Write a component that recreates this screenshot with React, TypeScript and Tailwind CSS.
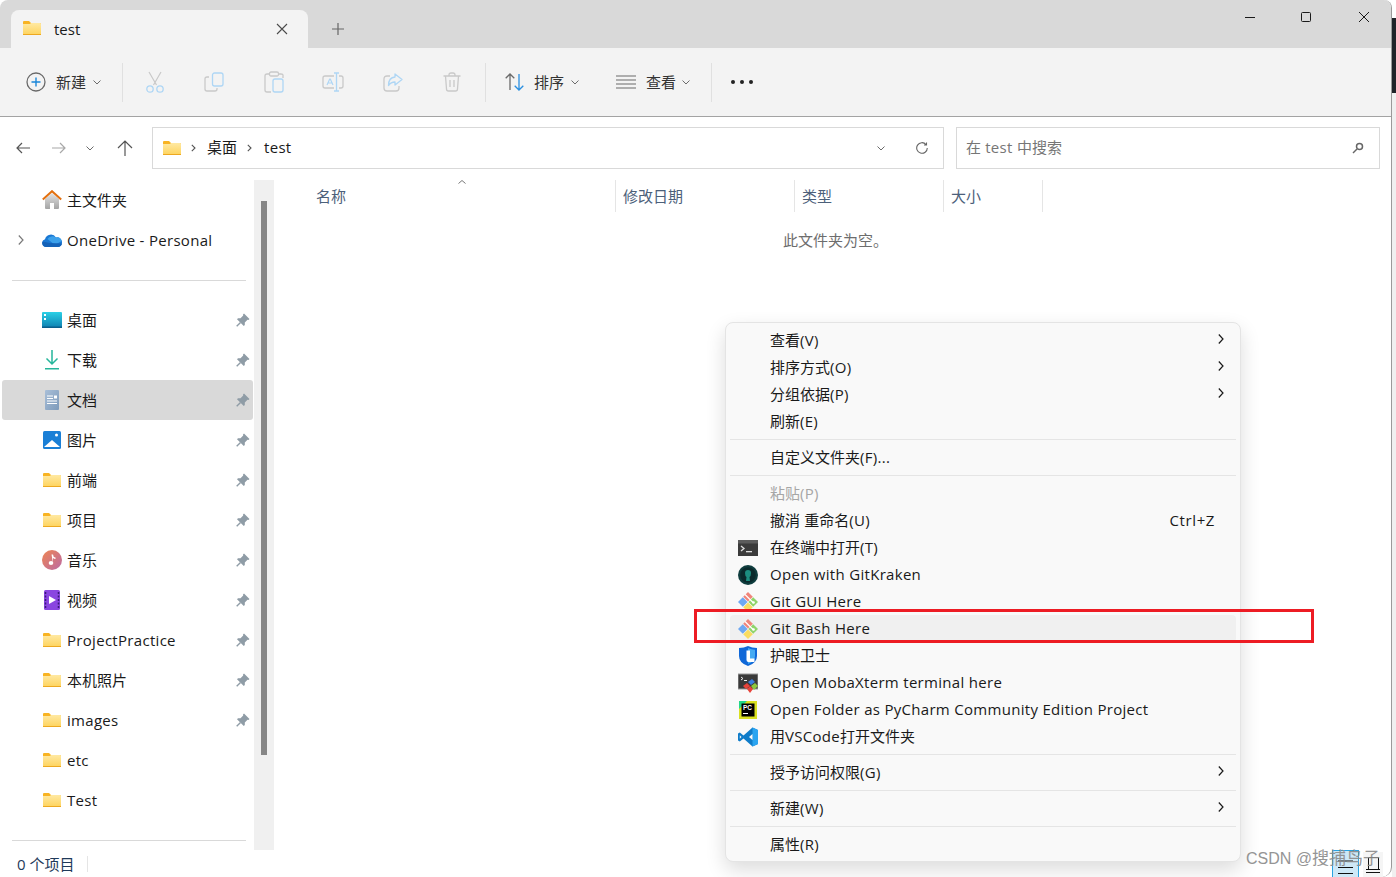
import type { ReactNode } from 'react';

// latin runs are a touch narrower in Open Sans than in the original UI font
function Txt({ text }: { text: string }) {
  return (
    <>
      {text.split(/([\x00-\x7f]+)/).map((part, i) =>
        i % 2 === 1 ? <span key={i} className="tracking-[0.3px]">{part}</span> : part
      )}
    </>
  );
}

function Folder({ id, className = '' }: { id: string; className?: string }) {
  return (
    <svg width="18" height="14" viewBox="0 0 18 14" className={className}>
      <defs>
        <linearGradient id={id} x1="0" y1="0" x2="0" y2="1">
          <stop offset="0" stopColor="#ffe9a3" />
          <stop offset="1" stopColor="#fed35c" />
        </linearGradient>
      </defs>
      <path d="M0 1q0-1 1-1h5l2 2h9q1 0 1 1v2H0z" fill="#f8b323" />
      <path d="M0 3h7l1-1h9q1 0 1 1v10q0 1-1 1H1q-1 0-1-1z" fill={`url(#${id})`} />
      <rect x="0" y="13" width="18" height="1" fill="#eda820" />
    </svg>
  );
}

function Home() {
  return (
    <svg width="20" height="20" viewBox="0 0 20 20">
      <defs>
        <linearGradient id="homeBody" x1="0" y1="0" x2="0" y2="1">
          <stop offset="0" stopColor="#e3e3e3" />
          <stop offset="1" stopColor="#a4a4a4" />
        </linearGradient>
      </defs>
      <path d="M3 9l7-6 7 6v9q0 1-1 1h-4v-6H8v6H4q-1 0-1-1z" fill="url(#homeBody)" />
      <path d="M0.800 9.500L10 1.200l9.200 8.300" fill="none" stroke="#e3700f" strokeWidth="2" />
    </svg>
  );
}

function Cloud() {
  return (
    <svg width="20" height="14" viewBox="0 0 20 14">
      <path d="M4 14a4 4 0 0 1-1-7.800A6 6 0 0 1 14 4.500 4.800 4.800 0 0 1 20 9.500 4.500 4.500 0 0 1 16 14z" fill="#1a78d4" />
      <path d="M5.500 6a6 6 0 0 1 8.500-1.500 4.800 4.800 0 0 1 5.600 3.500L13 12z" fill="#3ba0ea" />
      <path d="M4 14a4 4 0 0 1-3.500-5.500L8 10l12 0.500A4.500 4.500 0 0 1 16 14z" fill="#1462b8" />
    </svg>
  );
}

function Desktop() {
  return (
    <svg width="20" height="16" viewBox="0 0 20 16">
      <defs>
        <linearGradient id="deskBg" x1="0" y1="0" x2="0" y2="1">
          <stop offset="0" stopColor="#2ad0e6" />
          <stop offset="1" stopColor="#0f7fb0" />
        </linearGradient>
      </defs>
      <rect width="20" height="16" rx="1" fill="url(#deskBg)" />
      <rect x="2" y="2" width="2" height="2" fill="#fff" />
      <rect x="2" y="6" width="2" height="2" fill="#fff" />
      <rect x="0" y="14.500" width="20" height="1.500" fill="#0a5f8c" />
    </svg>
  );
}

function Download() {
  return (
    <svg width="14" height="20" viewBox="0 0 14 20" fill="none">
      <path d="M7 0v14M1.500 8.500L7 14l5.500-5.500" stroke="#25b59a" strokeWidth="1.500" />
      <rect x="0" y="18" width="14" height="1.500" fill="#25b59a" />
    </svg>
  );
}

function Doc() {
  return (
    <svg width="14" height="20" viewBox="0 0 14 20">
      <defs>
        <linearGradient id="docBg" x1="0" y1="0" x2="1" y2="1">
          <stop offset="0" stopColor="#a9bfd8" />
          <stop offset="1" stopColor="#7d9aba" />
        </linearGradient>
      </defs>
      <rect width="14" height="20" rx="1" fill="url(#docBg)" />
      <path d="M2 6h6M2 8.500h6M2 11h10M2 13.500h10" stroke="#fff" strokeWidth="1" />
      <rect x="9" y="5.500" width="3" height="3" fill="#fff" />
    </svg>
  );
}

function Picture() {
  return (
    <svg width="18" height="18" viewBox="0 0 18 18">
      <rect width="18" height="18" rx="1.500" fill="#1a7fd6" />
      <circle cx="13.500" cy="4" r="1.500" fill="#fff" />
      <path d="M1 16l8-7 8 7z" fill="#fff" />
    </svg>
  );
}

function Music() {
  return (
    <svg width="20" height="20" viewBox="0 0 20 20">
      <defs>
        <linearGradient id="musicBg" x1="0" y1="0" x2="1" y2="1">
          <stop offset="0" stopColor="#ee8552" />
          <stop offset="1" stopColor="#bb6aa6" />
        </linearGradient>
      </defs>
      <circle cx="10" cy="10" r="10" fill="url(#musicBg)" />
      <path d="M9.500 4.500h1.500q0 2.500 2.500 3v1.500q-1.500 0-2.500-1v5" fill="#fff" />
      <ellipse cx="9" cy="13" rx="2.300" ry="2" fill="#fff" />
    </svg>
  );
}

function Video() {
  return (
    <svg width="16" height="20" viewBox="0 0 16 20">
      <rect width="16" height="20" rx="1.500" fill="#8a45e0" />
      <path d="M5 6l7 4-7 4z" fill="#fff" />
      <path d="M1.500 2v16M14.500 2v16" stroke="#3b1a7a" strokeWidth="1.500" strokeDasharray="2 1.500" />
    </svg>
  );
}

function Pin() {
  return (
    <svg width="14" height="14" viewBox="0 0 14 14">
      <path d="M8 0.500L13.500 6 12.500 7 11.500 6.800 8.800 9.500 8.800 12 7.800 13 1 6.200 2 5.200 4.500 5.200 7.200 2.500 7 1.500z" fill="#8f9ca6" />
      <path d="M4.500 9.500L0.700 13.300" stroke="#8f9ca6" strokeWidth="1.400" />
    </svg>
  );
}

function GitIcon() {
  return (
    <svg width="20" height="20" viewBox="0 0 20 20">
      <path d="M10 0L14.800 4.800 10 9.600 5.200 4.800z" fill="#f0857a" />
      <path d="M4.800 5.200L9.600 10 4.800 14.800 0 10z" fill="#6ea8f2" />
      <path d="M15.200 5.200L20 10 15.200 14.800 10.400 10z" fill="#8fd46a" />
      <path d="M10 10.400L14.800 15.200 10 20 5.200 15.200z" fill="#f9dc62" />
      <path d="M7 2.500L15.500 11" stroke="#fff" strokeWidth="1.200" />
      <circle cx="15.500" cy="10.500" r="1.300" fill="#fff" />
    </svg>
  );
}

function TerminalIcon() {
  return (
    <svg width="20" height="16" viewBox="0 0 20 16">
      <rect width="20" height="16" fill="#3b3b3b" />
      <rect width="20" height="3.500" fill="#5c5c5c" />
      <path d="M3 6l3 2.500L3 11" fill="none" stroke="#ddd" strokeWidth="1.300" />
      <rect x="8" y="11" width="6" height="1.300" fill="#ddd" />
    </svg>
  );
}

function KrakenIcon() {
  return (
    <svg width="20" height="20" viewBox="0 0 20 20">
      <circle cx="10" cy="10" r="10" fill="#0f3d3e" />
      <circle cx="10" cy="10" r="7.800" fill="#0a2a2c" />
      <path d="M7 8a3 3 0 0 1 6 0q0 3-1.500 4l0.500 4H8l0.500-4Q7 11 7 8z" fill="#1c8e80" />
    </svg>
  );
}

function ShieldIcon() {
  return (
    <svg width="18" height="20" viewBox="0 0 18 20">
      <path d="M9 0q4 2 9 2v8q0 7-9 10-9-3-9-10V2q5 0 9-2z" fill="#1068d8" />
      <path d="M9 2q3.500 1.500 7 1.800V10q0 5.500-7 8z" fill="#45aaf2" />
      <path d="M7.500 4.500h3.500v8h4.500V16H9.500Q7.500 16 7.500 14z" fill="#fff" />
    </svg>
  );
}

function MobaIcon() {
  return (
    <svg width="20" height="20" viewBox="0 0 20 20">
      <rect y="1" width="20" height="15" fill="#3a3a3a" stroke="#9a9a9a" strokeWidth="1" />
      <path d="M3 4l2 1.500L3 7" fill="none" stroke="#eee" strokeWidth="1" />
      <rect x="6" y="7" width="3" height="1" fill="#eee" />
      <path d="M5 13l4-3 3 3-4 3z" fill="#e8433a" />
      <path d="M10 9l4-3 3 3-4 3z" fill="#3a7ee0" />
      <path d="M13 13l4-3 3 3-4 4z" fill="#8dc63f" />
      <path d="M9 16l3-3 3 3-3 4z" fill="#e8433a" />
    </svg>
  );
}

function PyCharmIcon() {
  return (
    <svg width="18" height="18" viewBox="0 0 18 18">
      <rect width="18" height="18" fill="#d9e021" />
      <path d="M0 0h8L0 8z" fill="#21d789" />
      <rect x="2.500" y="2.500" width="13" height="13" fill="#000" />
      <text x="4" y="9" fontSize="6.500" fontWeight="700" fill="#fff" fontFamily="Liberation Sans, sans-serif">PC</text>
      <rect x="4" y="12" width="5" height="1" fill="#fff" />
    </svg>
  );
}

function VSCodeIcon() {
  return (
    <svg width="20" height="20" viewBox="0 0 20 20">
      <path d="M14.500 0.500L20 3v14l-5.500 2.500L5.500 11.500 1.800 14.500 0 13.500V6.500l1.800-1 3.700 3z" fill="#0f7cc9" />
      <path d="M14.500 0.500L20 3v14l-5.500 2.500z" fill="#2aa4f0" />
      <path d="M14.500 7L11 10l3.500 3z" fill="#f9f9f9" />
      <path d="M1.800 8.300L3.500 10 1.800 11.700z" fill="#f9f9f9" />
    </svg>
  );
}

function Chevron({ className = '' }: { className?: string }) {
  return (
    <svg width="8" height="5" viewBox="0 0 8 5" fill="none" className={className}>
      <path d="M0.500 0.500L4 4l3.500-3.500" stroke="#6b6b6b" strokeWidth="1" />
    </svg>
  );
}

function MenuArrow() {
  return (
    <svg width="6" height="10" viewBox="0 0 6 10" fill="none" className="mb-[3px]">
      <path d="M0.800 0.500L5 5 0.800 9.500" stroke="#1a1a1a" strokeWidth="1.200" />
    </svg>
  );
}

const G = '#c9c9c9';
const B = '#aed6f5';

const toolIcons: ReactNode[] = [
  <svg key="cut" width="20" height="22" viewBox="0 0 20 22" fill="none">
    <path d="M4 1l7.500 13M16 1L8.500 14" stroke={G} strokeWidth="1.200" />
    <circle cx="5" cy="18" r="3.200" stroke={B} strokeWidth="1.300" />
    <circle cx="15" cy="18" r="3.200" stroke={B} strokeWidth="1.300" />
  </svg>,
  <svg key="copy" width="20" height="20" viewBox="0 0 20 20" fill="none">
    <path d="M5 5H3q-2 0-2 2v10q0 2 2 2h8q2 0 2-2v-1" stroke={G} strokeWidth="1.300" />
    <rect x="8.500" y="1" width="10.500" height="13" rx="2" stroke={B} strokeWidth="1.300" />
  </svg>,
  <svg key="paste" width="20" height="22" viewBox="0 0 20 22" fill="none">
    <path d="M5 3H3q-2 0-2 2v14q0 2 2 2h4M15 3h2q2 0 2 1v3" stroke={G} strokeWidth="1.300" />
    <rect x="5.500" y="1" width="9" height="4" rx="1.500" stroke={G} strokeWidth="1.300" />
    <rect x="9" y="8" width="10" height="13" rx="2" stroke={B} strokeWidth="1.300" />
  </svg>,
  <svg key="rename" width="22" height="20" viewBox="0 0 22 20" fill="none">
    <path d="M12 4H3q-2 0-2 2v8q0 2 2 2h9M17 4h2q2 0 2 2v8q0 2-2 2h-2" stroke={G} strokeWidth="1.300" />
    <path d="M5 13l2.700-6h0.600L11 13M6 11h4" stroke={B} strokeWidth="1.200" />
    <path d="M12 1h5M14.500 1v18M12 19h5" stroke={B} strokeWidth="1.300" />
  </svg>,
  <svg key="share" width="20" height="20" viewBox="0 0 20 20" fill="none">
    <path d="M7 4H4q-3 0-3 3v9q0 3 3 3h9q3 0 3-3v-2" stroke={G} strokeWidth="1.300" />
    <path d="M12 2l7 5.500-7 5.500v-3q-4 0-6.500 3.500 0-8 6.500-8.500z" stroke={B} strokeWidth="1.300" strokeLinejoin="round" />
  </svg>,
  <svg key="trash" width="18" height="20" viewBox="0 0 18 20" fill="none" stroke={G} strokeWidth="1.300">
    <path d="M0.500 4h17M6 4V3q0-2 2-2h2q2 0 2 2v1M2.500 4l1 13q0 2 2 2h7q2 0 2-2l1-13M7 8v7M11 8v7" />
  </svg>,
];

type NavItem = { label: string; icon: ReactNode; pin?: boolean; active?: boolean };

const navItems: NavItem[] = [
  { label: '桌面', icon: <Desktop />, pin: true },
  { label: '下载', icon: <Download />, pin: true },
  { label: '文档', icon: <Doc />, pin: true, active: true },
  { label: '图片', icon: <Picture />, pin: true },
  { label: '前端', icon: <Folder id="f1" />, pin: true },
  { label: '项目', icon: <Folder id="f2" />, pin: true },
  { label: '音乐', icon: <Music />, pin: true },
  { label: '视频', icon: <Video />, pin: true },
  { label: 'ProjectPractice', icon: <Folder id="f3" />, pin: true },
  { label: '本机照片', icon: <Folder id="f4" />, pin: true },
  { label: 'images', icon: <Folder id="f5" />, pin: true },
  { label: 'etc', icon: <Folder id="f6" /> },
  { label: 'Test', icon: <Folder id="f7" /> },
];

function NavRow({ item, expand }: { item: NavItem; expand?: boolean }) {
  return (
    <div className={`h-[40px] flex items-center rounded-[3px] ${item.active ? 'bg-[#d9d9d9]' : ''}`}>
      <div className="w-[40px] flex justify-end pr-[18px] shrink-0">
        {expand && (
          <svg width="6" height="10" viewBox="0 0 6 10" fill="none">
            <path d="M0.800 0.500L5 5 0.800 9.500" stroke="#7a7a7a" strokeWidth="1.200" />
          </svg>
        )}
      </div>
      <div className="w-[20px] flex justify-center shrink-0">{item.icon}</div>
      <span className="ml-[5px] flex-1 text-[#1a1a1a]"><Txt text={item.label} /></span>
      {item.pin && <div className="mr-[3px]"><Pin /></div>}
    </div>
  );
}

type MenuItem = {
  label: string;
  icon?: ReactNode;
  arrow?: boolean;
  shortcut?: string;
  disabled?: boolean;
  hover?: boolean;
};

const menuGroups: MenuItem[][] = [
  [
    { label: '查看(V)', arrow: true },
    { label: '排序方式(O)', arrow: true },
    { label: '分组依据(P)', arrow: true },
    { label: '刷新(E)' },
  ],
  [{ label: '自定义文件夹(F)...' }],
  [
    { label: '粘贴(P)', disabled: true },
    { label: '撤消 重命名(U)', shortcut: 'Ctrl+Z' },
    { label: '在终端中打开(T)', icon: <TerminalIcon /> },
    { label: 'Open with GitKraken', icon: <KrakenIcon /> },
    { label: 'Git GUI Here', icon: <GitIcon /> },
    { label: 'Git Bash Here', icon: <GitIcon />, hover: true },
    { label: '护眼卫士', icon: <ShieldIcon /> },
    { label: 'Open MobaXterm terminal here', icon: <MobaIcon /> },
    { label: 'Open Folder as PyCharm Community Edition Project', icon: <PyCharmIcon /> },
    { label: '用VSCode打开文件夹', icon: <VSCodeIcon /> },
  ],
  [{ label: '授予访问权限(G)', arrow: true }],
  [{ label: '新建(W)', arrow: true }],
  [{ label: '属性(R)' }],
];

function ContextMenu() {
  return (
    <div className="absolute left-[725px] top-[322px] w-[516px] h-[540px] bg-[#f9f9f9] border border-[#e4e4e4] rounded-[8px] shadow-[0_8px_20px_rgba(0,0,0,0.14)] px-[4px] pt-[4px] text-[#1a1a1a]">
      {menuGroups.map((group, i) => (
        <div key={i} className={i > 0 ? 'border-t border-[#e5e5e5] mt-[4px] pt-[4px]' : ''}>
          {group.map(item => (
            <div
              key={item.label}
              className={`h-[27px] flex items-center rounded-[4px] pr-[12px] ${item.hover ? 'bg-[#f0f0f0]' : ''} ${item.disabled ? 'text-[#a6a6a6]' : ''}`}
            >
              <div className="w-[20px] ml-[8px] flex justify-center shrink-0">{item.icon}</div>
              <span className="ml-[12px] pb-[2px] flex-1 whitespace-nowrap"><Txt text={item.label} /></span>
              {item.shortcut && <span className="mr-[9px] pb-[2px] tracking-[0.6px]">{item.shortcut}</span>}
              {item.arrow && <MenuArrow />}
            </div>
          ))}
        </div>
      ))}
    </div>
  );
}

function TitleBar() {
  return (
    <div className="h-[48px] bg-[#d9d9d9] flex items-end pl-[11px] shrink-0">
      <div className="w-[297px] h-[38px] bg-[#f3f3f3] rounded-t-[8px] flex items-center pl-[12px] pr-[20px]">
        <Folder id="tabFolder" className="-mt-[3px]" />
        <span className="ml-[13px] flex-1 text-[#1a1a1a] -mt-[1px]">test</span>
        <svg width="12" height="12" viewBox="0 0 12 12" className="-mt-[1px]" stroke="#4a4a4a" strokeWidth="1.100">
          <path d="M1 1l10 10M11 1L1 11" />
        </svg>
      </div>
      <svg width="12" height="12" viewBox="0 0 12 12" className="ml-[24px] mb-[13px]" stroke="#666" strokeWidth="1.200">
        <path d="M6 0v12M0 6h12" />
      </svg>
      <div className="flex-1" />
      <div className="flex items-center self-start h-[34px] pr-[22px] text-black">
        <svg width="10" height="10" viewBox="0 0 10 10" stroke="#1a1a1a" strokeWidth="1">
          <path d="M0 5.500h10" />
        </svg>
        <svg width="10" height="10" viewBox="0 0 10 10" fill="none" stroke="#1a1a1a" strokeWidth="1" className="ml-[46px]">
          <rect x="0.500" y="0.500" width="9" height="9" rx="1" />
        </svg>
        <svg width="10" height="10" viewBox="0 0 10 10" stroke="#1a1a1a" strokeWidth="1" className="ml-[48px]">
          <path d="M0 0l10 10M10 0L0 10" />
        </svg>
      </div>
    </div>
  );
}

function Toolbar() {
  return (
    <div className="h-[69px] bg-[#f3f3f3] border-b border-[#a3a3a3] flex items-center pl-[26px] text-[#333] shrink-0">
      <svg width="20" height="20" viewBox="0 0 20 20" fill="none">
        <circle cx="10" cy="10" r="9" stroke="#6a6a6a" strokeWidth="1.300" />
        <path d="M10 5.500v9M5.500 10h9" stroke="#1a86d9" strokeWidth="1.400" />
      </svg>
      <span className="ml-[10px]">新建</span>
      <Chevron className="ml-[7px]" />
      <div className="w-px h-[39px] bg-[#e0e0e0] ml-[21px]" />
      <div className="flex ml-[2px]">
        {toolIcons.map((icon, i) => (
          <div key={i} className="w-[59.500px] flex justify-center items-center">{icon}</div>
        ))}
      </div>
      <div className="w-px h-[39px] bg-[#e0e0e0] ml-[3px]" />
      <svg width="20" height="18" viewBox="0 0 20 18" fill="none" className="ml-[19px]">
        <path d="M5 17V1M0.700 5.300L5 1l4.300 4.300" stroke="#6a6a6a" strokeWidth="1.300" />
        <path d="M14 1v16M9.700 12.700L14 17l4.300-4.300" stroke="#2a8fe0" strokeWidth="1.300" />
      </svg>
      <span className="ml-[9px]">排序</span>
      <Chevron className="ml-[7px]" />
      <svg width="20" height="14" viewBox="0 0 20 14" stroke="#6a6a6a" strokeWidth="1.200" className="ml-[37px]">
        <path d="M0 1h20M0 5h20M0 9h20M0 13h20" />
      </svg>
      <span className="ml-[10px]">查看</span>
      <Chevron className="ml-[6px]" />
      <div className="w-px h-[39px] bg-[#e0e0e0] ml-[21px]" />
      <div className="ml-[19px] flex gap-[5px]">
        <div className="w-[4px] h-[4px] rounded-full bg-[#222]" />
        <div className="w-[4px] h-[4px] rounded-full bg-[#222]" />
        <div className="w-[4px] h-[4px] rounded-full bg-[#222]" />
      </div>
    </div>
  );
}

function AddressRow() {
  return (
    <div className="h-[63px] flex items-center pb-[1px] shrink-0">
      <div className="w-[152px] flex items-center pl-[16px] shrink-0">
        <svg width="14" height="12" viewBox="0 0 14 12" fill="none" stroke="#555" strokeWidth="1.200">
          <path d="M14 6H1M6 1L1 6l5 5" />
        </svg>
        <svg width="14" height="12" viewBox="0 0 14 12" fill="none" stroke="#a8a8a8" strokeWidth="1.200" className="ml-[22px]">
          <path d="M0 6h13M8 1l5 5-5 5" />
        </svg>
        <Chevron className="ml-[20px]" />
        <svg width="16" height="16" viewBox="0 0 16 16" fill="none" stroke="#555" strokeWidth="1.200" className="ml-[23px]">
          <path d="M8 16V1M1 8l7-7 7 7" />
        </svg>
      </div>
      <div className="w-[792px] h-[42px] border border-[#d9d9d9] flex items-center pl-[10px] pr-[15px] shrink-0">
        <Folder id="addrFolder" />
        <svg width="5" height="8" viewBox="0 0 5 8" fill="none" stroke="#555" strokeWidth="1.100" className="ml-[10px]">
          <path d="M0.800 0.800L4 4 0.800 7.200" />
        </svg>
        <span className="ml-[11px] pb-[2px] text-[#1a1a1a]">桌面</span>
        <svg width="5" height="8" viewBox="0 0 5 8" fill="none" stroke="#555" strokeWidth="1.100" className="ml-[10px]">
          <path d="M0.800 0.800L4 4 0.800 7.200" />
        </svg>
        <span className="ml-[12px] pb-[2px] text-[#1a1a1a]"><Txt text="test" /></span>
        <div className="flex-1" />
        <Chevron className="mr-[31px]" />
        <svg width="12" height="12" viewBox="0 0 12 12" fill="none" stroke="#666" strokeWidth="1.100">
          <path d="M10 2.500A5.300 5.300 0 1 0 11.300 6M10.500 0.500v2.500H8" />
        </svg>
      </div>
      <div className="ml-[12px] w-[424px] h-[42px] border border-[#d9d9d9] flex items-center pl-[9px] pr-[15px] shrink-0 text-[#767676]">
        <span className="flex-1 pb-[2px]"><Txt text="在 test 中搜索" /></span>
        <svg width="12" height="12" viewBox="0 0 12 12" fill="none" stroke="#666" strokeWidth="1.500">
          <circle cx="7.500" cy="4.500" r="3" />
          <path d="M5 7l-4 4" />
        </svg>
      </div>
    </div>
  );
}

function Sidebar() {
  return (
    <div className="w-[274px] flex shrink-0">
      <div className="w-[254px] pl-[2px] pr-[1px]">
        <NavRow item={{ label: '主文件夹', icon: <Home /> }} />
        <NavRow item={{ label: 'OneDrive - Personal', icon: <Cloud /> }} expand />
        <div className="h-px bg-[#d9d9d9] mt-[20px] mb-[19px] ml-[10px] mr-[7px]" />
        {navItems.map(item => <NavRow key={item.label} item={item} />)}
        <div className="h-px bg-[#d9d9d9] mt-[20px] ml-[10px] mr-[7px]" />
      </div>
      <div className="w-[20px] bg-[#f0f0f0] pt-[21px] pl-[7px]">
        <div className="w-[6px] h-[554px] bg-[#868686]" />
      </div>
    </div>
  );
}

const columns = [
  { label: '修改日期', width: 'w-[179px]' },
  { label: '类型', width: 'w-[149px]' },
  { label: '大小', width: 'w-[99px]' },
];

function FileList() {
  return (
    <div className="flex-1 text-[#4c607a]">
      <div className="h-[32px] flex">
        <div className="w-[341px] pl-[42px] flex items-center relative">
          名称
          <svg width="8" height="4" viewBox="0 0 8 4" fill="none" stroke="#777" strokeWidth="1" className="absolute left-[184px] top-0">
            <path d="M0.500 3.500L4 0.500l3.500 3" />
          </svg>
        </div>
        {columns.map(c => (
          <div key={c.label} className={`${c.width} border-l border-[#e5e5e5] pl-[7px] flex items-center`}>{c.label}</div>
        ))}
        <div className="border-l border-[#e5e5e5]" />
      </div>
      <div className="pl-[509px] pt-[18px] text-[#6d6d6d]">此文件夹为空。</div>
    </div>
  );
}

export default function App() {
  return (
    <div className="relative w-[1396px] h-[877px] overflow-hidden bg-white flex text-[15px] leading-[20px] font-['Open_Sans','Noto_Sans_CJK_SC',sans-serif]">
      <div className="w-[1392px] h-[877px] flex flex-col border-r border-[#9a9a9a] rounded-tl-[8px] rounded-tr-[8px] rounded-br-[10px] overflow-hidden shrink-0">
        <TitleBar />
        <Toolbar />
        <AddressRow />
        <div className="h-[670px] flex shrink-0">
          <Sidebar />
          <FileList />
        </div>
        <div className="h-[27px] flex items-center pl-[17px] text-[#1f3a5a] shrink-0">
          <span className="w-[70px]">0 个项目</span>
          <div className="w-px h-[16px] bg-[#e5e5e5]" />
        </div>
      </div>
      <div className="w-[4px] flex flex-col">
        <div className="h-[18px] bg-white" />
        <div className="h-[75px] bg-[#1f2328]" />
        <div className="flex-1 bg-[#f0f0f0]" />
      </div>

      <ContextMenu />

      <div className="absolute left-[694px] top-[609px] w-[620px] h-[34px] border-[3px] border-[#ed1c24]" />

      <div className="absolute left-[1332px] top-[850px] w-[27px] h-[27px] bg-[#cde8f7] border-x border-t border-[#29a3e0] flex justify-center pt-[9px]">
        <svg width="15" height="14" viewBox="0 0 15 14" stroke="#111" strokeWidth="1">
          <path d="M0 1h15M0 7.500h15M0 13.500h15" />
        </svg>
      </div>
      <div className="absolute left-[1363px] top-[852px] w-[20px] h-[25px] bg-[#f5f5f5] flex justify-center pt-[5px]">
        <svg width="14" height="16" viewBox="0 0 14 16" fill="none" stroke="#111" strokeWidth="1">
          <path d="M2.500 12V0.500h10V12M0 12.500h14M0 15.500h14" />
        </svg>
      </div>
      <div className="absolute left-[1246px] top-[848px] text-[16px] leading-[22px] text-[#8a8a8a] opacity-90 font-['Liberation_Sans','Noto_Sans_CJK_SC',sans-serif]">
        CSDN @<span className="text-[17px]">搜捕鸟子</span>
      </div>
    </div>
  );
}
